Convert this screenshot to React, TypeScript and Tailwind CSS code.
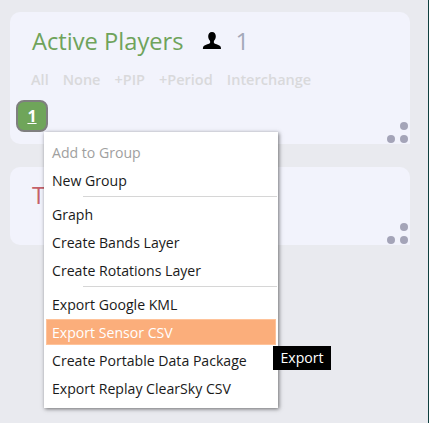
import React from "react";

function Dots() {
  return (
    <div className="absolute right-[2px] bottom-[1px] flex flex-col items-end gap-[5px]">
      <span className="block h-[8px] w-[8px] rounded-full bg-[#a4a4b8]" />
      <div className="flex gap-[5px]">
        <span className="block h-[8px] w-[8px] rounded-full bg-[#a4a4b8]" />
        <span className="block h-[8px] w-[8px] rounded-full bg-[#a4a4b8]" />
      </div>
    </div>
  );
}

function Item({ children, disabled, active }: { children: React.ReactNode; disabled?: boolean; active?: boolean }) {
  return (
    <div
      className={
        active
          ? "mx-[2px] mb-[2px] flex h-[26px] items-center border border-[#ffc39a] bg-[#fbae7b] pl-[5px] pt-[2px] text-white"
          : disabled
            ? "flex h-[28px] items-center pl-[8px] text-[#a0a0a0]"
            : "flex h-[28px] items-center pl-[8px] text-[#1a1a1a]"
      }
    >
      {children}
    </div>
  );
}

function Sep() {
  return <div className="mb-[4px] ml-[39px] mr-px mt-px h-[1px] bg-[#d6d6d6]" />;
}

export default function App() {
  return (
    <div className="relative h-[423px] w-[430px] overflow-hidden bg-white font-['Open_Sans','Noto_Sans',sans-serif]">
      <div className="h-full w-[429px] border-r border-[#0f3f3f] bg-[#e9eaef] pl-[10px] pt-[12px]">
        <section className="relative h-[132px] w-[400px] rounded-tl-[10px] rounded-tr-[10px] rounded-bl-[10px] bg-[#f2f3fc] pl-[22px] pt-[13px]">
          <div className="flex h-[32px] items-center">
            <h2 className="text-[23.7px] font-normal leading-[32px] text-[#6fa35b]">Active Players</h2>
            <svg className="ml-[18px] h-[20px] w-[20px]" viewBox="0 0 20 20" fill="#000">
              <path d="M10 1c2.500 0 3.800 2 3.800 4.300 0 2-.9 3.700-1.900 4.700v2c0 .8 5.100 1.500 6.600 3.500.4.600.5 2 .5 2.500H.9c0-.5.100-1.900.5-2.500C2.900 13.500 8.100 12.800 8.100 12v-2c-1-1-1.900-2.700-1.900-4.700C6.200 3 7.500 1 10 1z" />
            </svg>
            <span className="ml-[14px] text-[24px] leading-[32px] text-[#a3a8b8]">1</span>
          </div>
          <div className="-ml-[1px] mt-[13px] flex gap-[14px] text-[14.5px] font-semibold leading-[20px] text-[#d9d9db]">
            <span>All</span>
            <span>None</span>
            <span>+PIP</span>
            <span>+Period</span>
            <span>Interchange</span>
          </div>
          <Dots />
          <div className="absolute left-[6px] top-[88px] flex h-[32px] w-[32px] items-center justify-center rounded-[8px] border-2 border-[#7f7f7f] bg-[#6fa55a] text-[16px] font-bold text-white">
            <span className="underline">1</span>
          </div>
        </section>
        <section className="relative mt-[23px] h-[78px] w-[400px] rounded-tl-[10px] rounded-tr-[10px] rounded-bl-[10px] bg-[#f2f3fc] pl-[22px] pt-[12px]">
          <div className="text-[24px] leading-[32px] text-[#c4606a]">T</div>
          <Dots />
        </section>
      </div>

      <nav className="absolute left-[44px] top-[132px] w-[234px] bg-white pb-[5px] pt-[7px] text-[14.1px] shadow-[1px_1px_4px_rgba(0,0,0,0.55)]">
        <Item disabled>Add to Group</Item>
        <Item>New Group</Item>
        <Sep />
        <Item>Graph</Item>
        <Item>Create Bands Layer</Item>
        <Item>Create Rotations Layer</Item>
        <Sep />
        <Item>Export Google KML</Item>
        <Item active>Export Sensor CSV</Item>
        <Item>Create Portable Data Package</Item>
        <Item>Export Replay ClearSky CSV</Item>
      </nav>

      <div className="absolute left-[273px] top-[346px] flex h-[24px] w-[58px] items-center justify-center bg-black text-[14.1px] text-white">
        Export
      </div>
    </div>
  );
}
